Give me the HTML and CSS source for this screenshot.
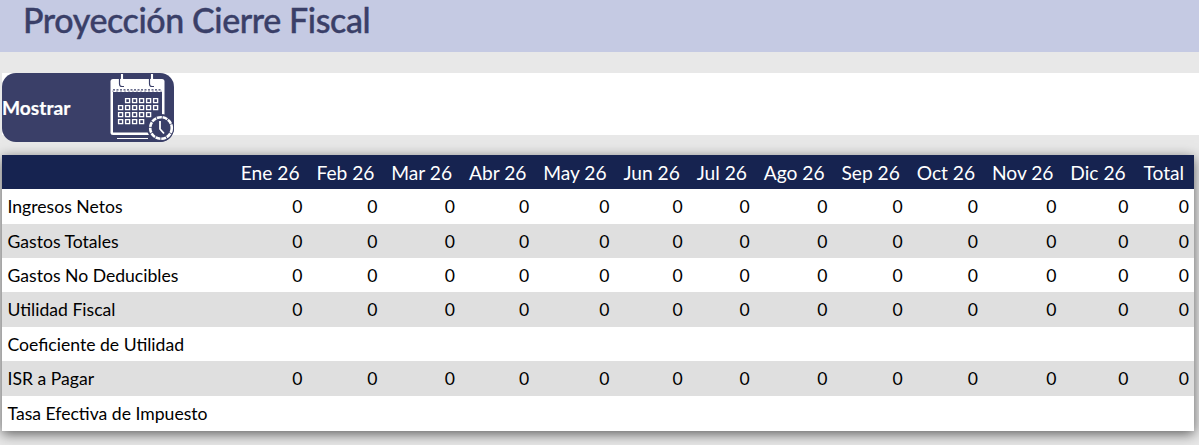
FILE: index.html
```html
<!DOCTYPE html>
<html lang="es">
<head>
<meta charset="utf-8">
<title>Proyección Cierre Fiscal</title>
<link rel="stylesheet" href="styles.css">
</head>
<body>
<header class="page-header"><h1 class="page-title">Proyección Cierre Fiscal</h1></header>
<section class="toolbar">
  <button class="show-btn" type="button">
    <span class="show-label">Mostrar</span>
    <svg class="show-icon" width="66" height="69" viewBox="0 0 66 69" fill="none">
      <rect x="2.500" y="6" width="54" height="56" rx="2.500" fill="#fff"/>
      <rect x="5" y="19" width="49" height="40.500" fill="#3a3f68"/>
      <path d="M5 16.800H54" stroke="#3a3f68" stroke-width="1.200" stroke-dasharray="2 1.500"/>
      <path d="M4 18.200H55" stroke="#aab" stroke-width="1" stroke-dasharray="2 2"/>
      <path d="M11.500 5V11Q11.500 13.500 14 13.500H16M41.500 5V11Q41.500 13.500 44 13.500H46" stroke="#3a3f68" stroke-width="1.200"/>
      <path d="M14 1V11M44 1V11" stroke="#fff" stroke-width="2.200"/>
      <path d="M12.500 1V5M15.500 1V5M42.500 1V5M45.500 1V5" stroke="#3a3f68" stroke-width=".6"/>
      <g stroke="#fff" stroke-width="1.400">
        <path d="M17.600 25.600h4v4h-4zM24.600 25.600h4v4h-4zM31.600 25.600h4v4h-4zM38.600 25.600h4v4h-4zM45.600 25.600h4v4h-4z"/>
        <path d="M10.600 32.600h4v4h-4zM17.600 32.600h4v4h-4zM24.600 32.600h4v4h-4zM31.600 32.600h4v4h-4zM38.600 32.600h4v4h-4zM45.600 32.600h4v4h-4z"/>
        <path d="M10.600 39.600h4v4h-4zM17.600 39.600h4v4h-4zM24.600 39.600h4v4h-4zM31.600 39.600h4v4h-4zM38.600 39.600h4v4h-4z"/>
        <path d="M10.600 46.600h4v4h-4zM17.600 46.600h4v4h-4zM24.600 46.600h4v4h-4zM31.600 46.600h4v4h-4z"/>
      </g>
      <circle cx="53" cy="55" r="14" fill="#3a3f68"/>
      <circle cx="53" cy="55" r="10.800" stroke="#fff" stroke-width="2.600" stroke-dasharray="5 .8"/>
      <path d="M52 48V56L56 60.500" stroke="#fff" stroke-width="1.800"/>
      <path d="M9 65.500H40" stroke="#fff" stroke-width="1"/>
    </svg>
  </button>
</section>
<div class="table-wrap">
<table class="report">
  <thead>
    <tr><th class="label-col"></th><th>Ene 26</th><th>Feb 26</th><th>Mar 26</th><th>Abr 26</th><th>May 26</th><th>Jun 26</th><th>Jul 26</th><th>Ago 26</th><th>Sep 26</th><th>Oct 26</th><th>Nov 26</th><th>Dic 26</th><th>Total</th></tr>
  </thead>
  <tbody>
    <tr class="tall"><td>Ingresos Netos</td><td>0</td><td>0</td><td>0</td><td>0</td><td>0</td><td>0</td><td>0</td><td>0</td><td>0</td><td>0</td><td>0</td><td>0</td><td>0</td></tr>
    <tr><td>Gastos Totales</td><td>0</td><td>0</td><td>0</td><td>0</td><td>0</td><td>0</td><td>0</td><td>0</td><td>0</td><td>0</td><td>0</td><td>0</td><td>0</td></tr>
    <tr><td>Gastos No Deducibles</td><td>0</td><td>0</td><td>0</td><td>0</td><td>0</td><td>0</td><td>0</td><td>0</td><td>0</td><td>0</td><td>0</td><td>0</td><td>0</td></tr>
    <tr class="tall"><td>Utilidad Fiscal</td><td>0</td><td>0</td><td>0</td><td>0</td><td>0</td><td>0</td><td>0</td><td>0</td><td>0</td><td>0</td><td>0</td><td>0</td><td>0</td></tr>
    <tr><td colspan="14">Coeficiente de Utilidad</td></tr>
    <tr class="tall"><td>ISR a Pagar</td><td>0</td><td>0</td><td>0</td><td>0</td><td>0</td><td>0</td><td>0</td><td>0</td><td>0</td><td>0</td><td>0</td><td>0</td><td>0</td></tr>
    <tr class="tall"><td colspan="14">Tasa Efectiva de Impuesto</td></tr>
  </tbody>
</table>
</div>
</body>
</html>
```
FILE: styles.css
```css
html, body { margin: 0; padding: 0; }
body {
  background: #e8e8e8;
  font-family: Lato, "Open Sans", sans-serif;
  color: #000;
  height: 445px;
  overflow: hidden;
}
.page-header {
  height: 52px;
  background: #c5cae3;
  padding-left: 23px;
}
.page-title {
  margin: 0;
  font-size: 34px;
  letter-spacing: -0.4px;
  line-height: 39px;
  font-weight: 500;
  color: #3a3f68;
  -webkit-text-stroke: 0.4px #3a3f68;
}
.toolbar {
  margin-top: 21px;
  margin-left: 2px;
  height: 62px;
  background: #fff;
}
.show-btn {
  display: flex;
  align-items: center;
  justify-content: space-between;
  width: 172px;
  height: 69px;
  padding: 0;
  border: 0;
  border-radius: 14px;
  background: #3a3f68;
  color: #fff;
  font: 700 19.2px Lato, sans-serif;
  overflow: hidden;
}
.show-label { margin-top: -1px; -webkit-text-stroke: 0.2px #fff; }
.show-icon { display: block; flex: none; }
.table-wrap {
  margin: 20px 5px 0 2px;
  box-shadow: 0 3px 12px rgba(0,0,0,.6);
}
.report {
  width: 100%;
  border-collapse: collapse;
  background: #fff;
  font-size: 17.6px;
}
.report th {
  background: #162350;
  color: #fff;
  font-size: 19.2px;
  font-weight: 400;
  height: 34px;
  padding: 0 9.9px 0 6.93px;
  text-align: right;
  white-space: nowrap;
}
.report th.label-col { width: 100%; }
.report th:last-child { padding-left: 7.93px; }
.report td {
  height: 34px;
  padding: 0 7px 0 5.5px;
  text-align: right;
  white-space: nowrap;
}
.report td:last-child { padding-right: 5px; }
.report .tall td { height: 35px; }
.report td:first-child { text-align: left; }
.report tbody tr:nth-child(even) td { background: #dfdfdf; }
```
